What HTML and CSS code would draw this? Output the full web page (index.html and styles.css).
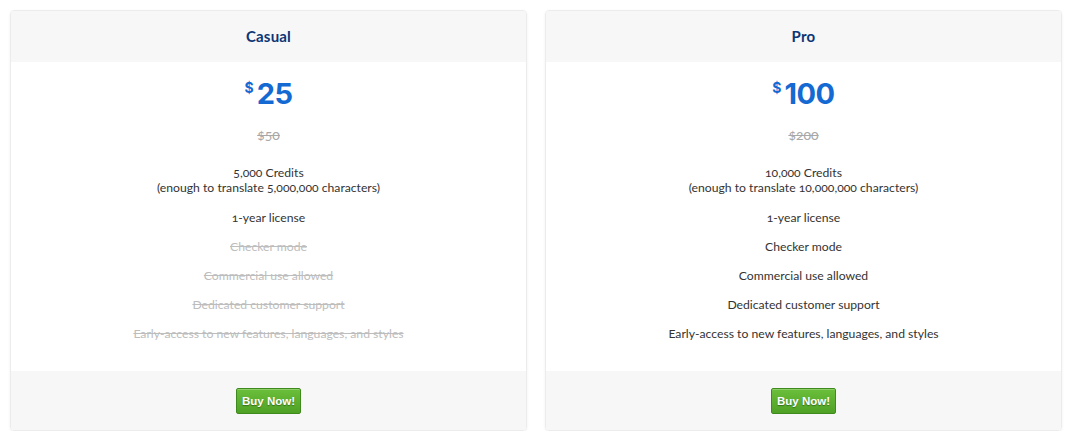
FILE: index.html
```html
<!DOCTYPE html>
<html>
<head>
<meta charset="utf-8">
<link rel="stylesheet" href="styles.css">
</head>
<body>
<div class="plans">
  <div class="card">
    <div class="card-head">Casual</div>
    <div class="card-body">
      <div class="price"><span class="cur">$</span><span class="amt">25</span></div>
      <div class="old">$50</div>
      <ul class="features">
        <li>5,000 Credits<br>(enough to translate 5,000,000 characters)</li>
        <li>1-year license</li>
        <li class="off">Checker mode</li>
        <li class="off">Commercial use allowed</li>
        <li class="off">Dedicated customer support</li>
        <li class="off">Early-access to new features, languages, and styles</li>
      </ul>
    </div>
    <div class="card-foot"><button class="buy">Buy Now!</button></div>
  </div>
  <div class="card">
    <div class="card-head">Pro</div>
    <div class="card-body">
      <div class="price"><span class="cur">$</span><span class="amt">100</span></div>
      <div class="old">$200</div>
      <ul class="features">
        <li>10,000 Credits<br>(enough to translate 10,000,000 characters)</li>
        <li>1-year license</li>
        <li>Checker mode</li>
        <li>Commercial use allowed</li>
        <li>Dedicated customer support</li>
        <li>Early-access to new features, languages, and styles</li>
      </ul>
    </div>
    <div class="card-foot"><button class="buy">Buy Now!</button></div>
  </div>
</div>
</body>
</html>
```
FILE: styles.css
```css
html, body { margin: 0; padding: 0; background: #fff; }
body {
  padding: 10px 8px 0 10px;
  font-family: Lato, "Open Sans", sans-serif;
  color: #333;
}
.plans { display: flex; gap: 18px; }
.card {
  width: 515px;
  height: 419px;
  border: 1px solid #ececec;
  border-radius: 4px;
  box-shadow: 0 1px 3px rgba(0,0,0,0.06);
  display: flex;
  flex-direction: column;
  overflow: hidden;
}
.card-head {
  height: 49px;
  padding-bottom: 2px;
  background: #f7f7f7;
  display: flex;
  align-items: center;
  justify-content: center;
  font-size: 15px;
  font-weight: 700;
  color: #0d3575;
  letter-spacing: 0.2px;
}
.card-body {
  flex: 1;
  text-align: center;
  padding-top: 14px;
}
.price {
  display: flex;
  justify-content: center;
  align-items: flex-start;
  color: #1469d2;
  font-family: Inter, Roboto, sans-serif;
  font-weight: 700;
  height: 36px;
}
.cur { font-size: 14px; margin-top: 3px; margin-right: 3px; }
.amt { font-size: 29px; line-height: 36px; letter-spacing: -0.5px; }
.old {
  margin-top: 15px;
  font-size: 14px;
  color: #a8a8a8;
  text-decoration: line-through;
  font-variant-numeric: oldstyle-nums;
  line-height: 16px;
}
.features {
  list-style: none;
  margin: 22px 0 0;
  padding: 0;
  font-size: 12.2px;
  line-height: 15px;
  font-variant-numeric: oldstyle-nums;
}
.features li { margin-bottom: 14px; }
.features li:first-child { margin-bottom: 15px; }
.features li.off { color: #bdbdbd; text-decoration: line-through; }
.card-foot {
  height: 59px;
  background: #f7f7f7;
  display: flex;
  align-items: center;
  justify-content: center;
}
.buy {
  width: 65px;
  height: 26px;
  padding: 0;
  border: 1px solid #3f8a1c;
  border-radius: 2px;
  background: linear-gradient(#6abf3a, #4fa126);
  color: #fff;
  font-family: "Liberation Sans", Arial, sans-serif;
  font-weight: 700;
  font-size: 11.5px;
  text-shadow: 0 1px 1px rgba(0,0,0,0.35);
  box-shadow: inset 0 1px 0 rgba(255,255,255,0.25);
}
```
